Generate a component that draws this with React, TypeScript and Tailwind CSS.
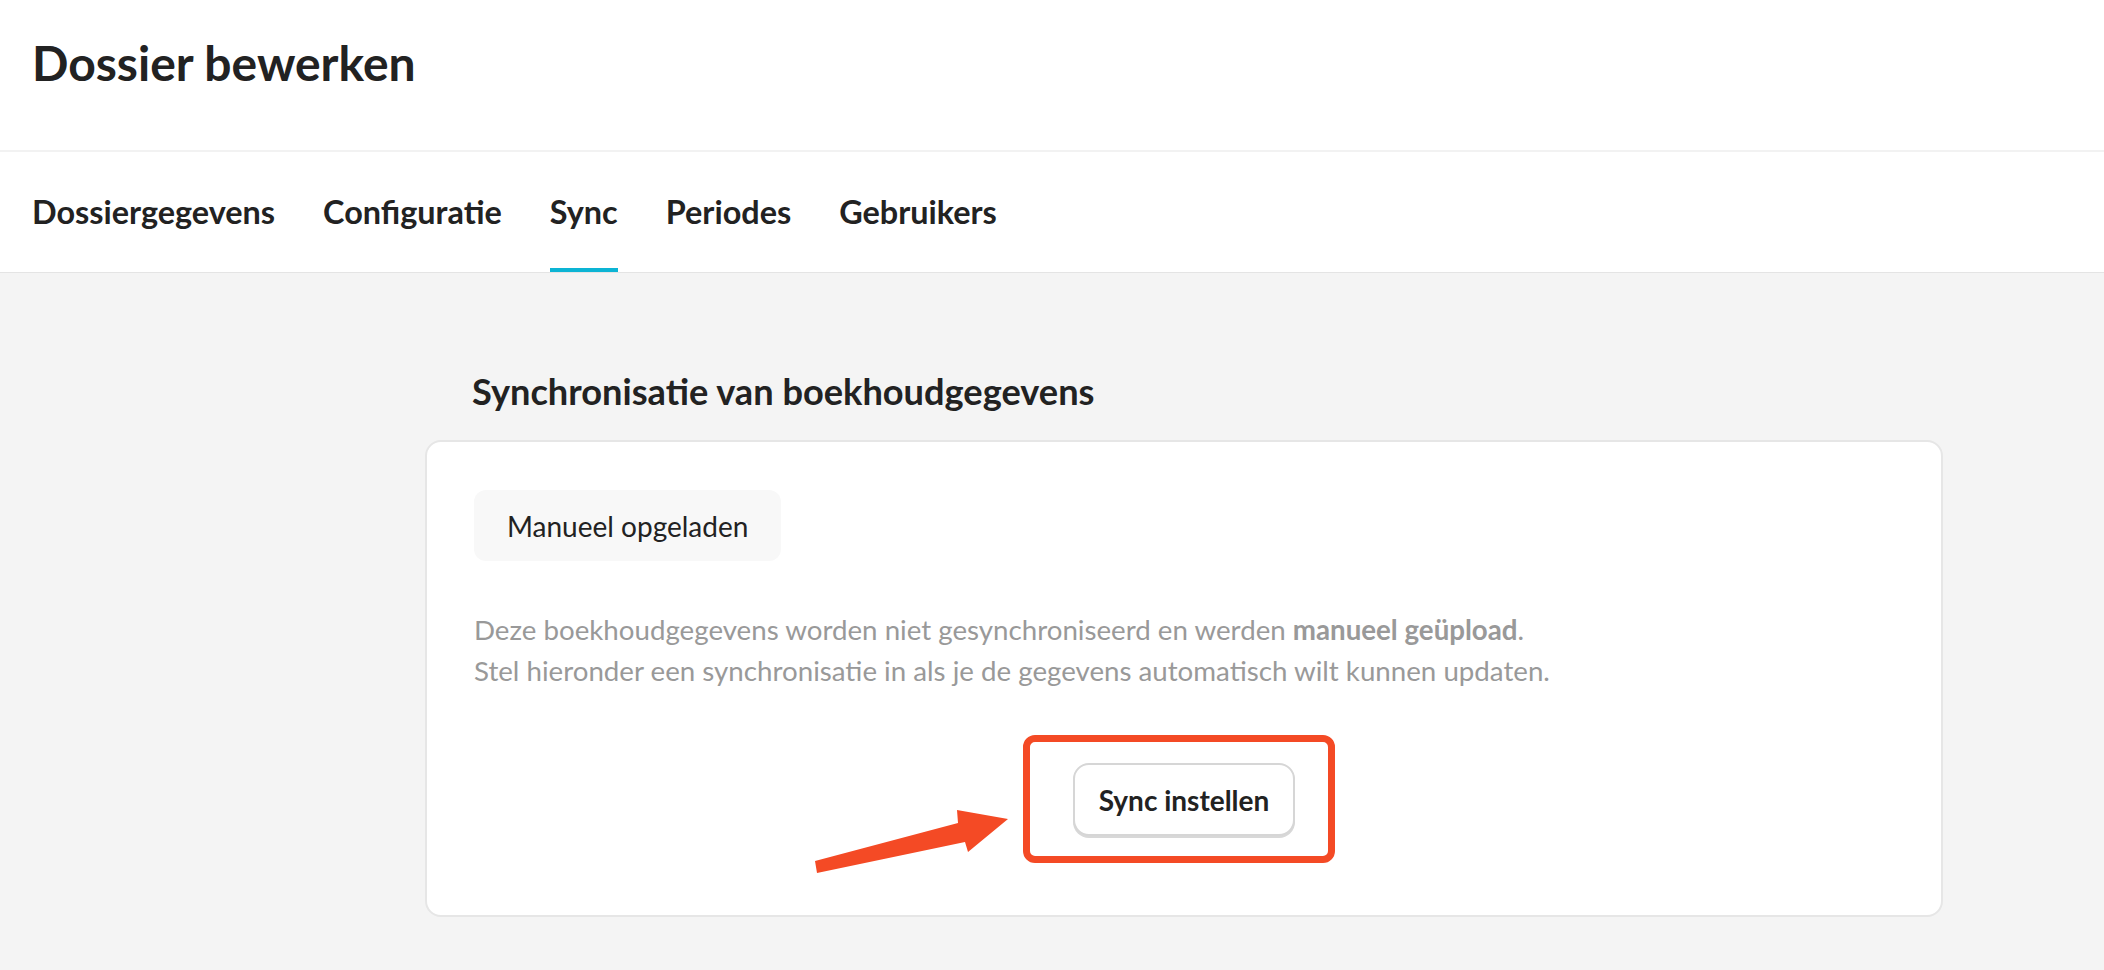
export default function App() {
  const tabs = ["Dossiergegevens", "Configuratie", "Sync", "Periodes", "Gebruikers"];
  const active = "Sync";

  return (
    <div className="min-h-screen bg-[#f4f4f4] font-['Lato',sans-serif] text-[#222]">
      <header className="bg-white">
        <div className="h-[152px] border-b-2 border-[#f2f2f2] px-8 pt-[39px]">
          <h1 className="text-[48px] font-bold leading-none">Dossier bewerken</h1>
        </div>
        <nav className="flex h-[121px] gap-12 border-b border-[#e4e4e4] px-8">
          {tabs.map((t) => (
            <div key={t} className="relative flex h-full items-center text-[32.4px] font-bold">
              {t}
              {t === active && <span className="absolute bottom-0 left-0 h-1 w-full bg-[#0cb4d4]" />}
            </div>
          ))}
        </nav>
      </header>

      <main className="ml-[425px] w-[1518px] pt-[96px]">
        <h2 className="ml-[47px] text-[36.2px] font-bold leading-[44px]">Synchronisatie van boekhoudgegevens</h2>

        <section className="mt-[27px] rounded-2xl border-2 border-[#e6e6e6] bg-white px-[47px] pt-[48px] pb-[79px]">
          <div className="inline-flex h-[71px] items-center rounded-xl bg-[#f8f8f8] px-[33px] text-[28px]">
            Manueel opgeladen
          </div>

          <p className="mt-[48px] text-[27.7px] leading-[41px] text-[#999]">
            Deze boekhoudgegevens worden niet gesynchroniseerd en werden <b className="font-bold">manueel geüpload</b>.
            <br />
            Stel hieronder een synchronisatie in als je de gegevens automatisch wilt kunnen updaten.
          </p>

          <div className="mt-[72px] flex justify-center">
            <div className="relative">
              <button className="h-[73px] rounded-2xl border-2 border-[#d6d6d6] bg-white px-[24px] text-[28px] font-bold text-[#222] shadow-[0_2px_0_#d8d8d8]">
                Sync instellen
              </button>
              {/* annotation */}
              <div className="pointer-events-none absolute -top-[28px] -bottom-[27px] -left-[50px] -right-[40px] rounded-xl border-[7px] border-[#f44a25]" />
              <svg className="pointer-events-none absolute -left-[272px] top-[37px]" width="220" height="80" viewBox="0 0 220 80">
                <path d="M14 61 L157 23 L156 10 L207 19 L167 52 L164 42 L16 73 Z" fill="#f44a25" />
              </svg>
            </div>
          </div>
        </section>
      </main>
    </div>
  );
}
